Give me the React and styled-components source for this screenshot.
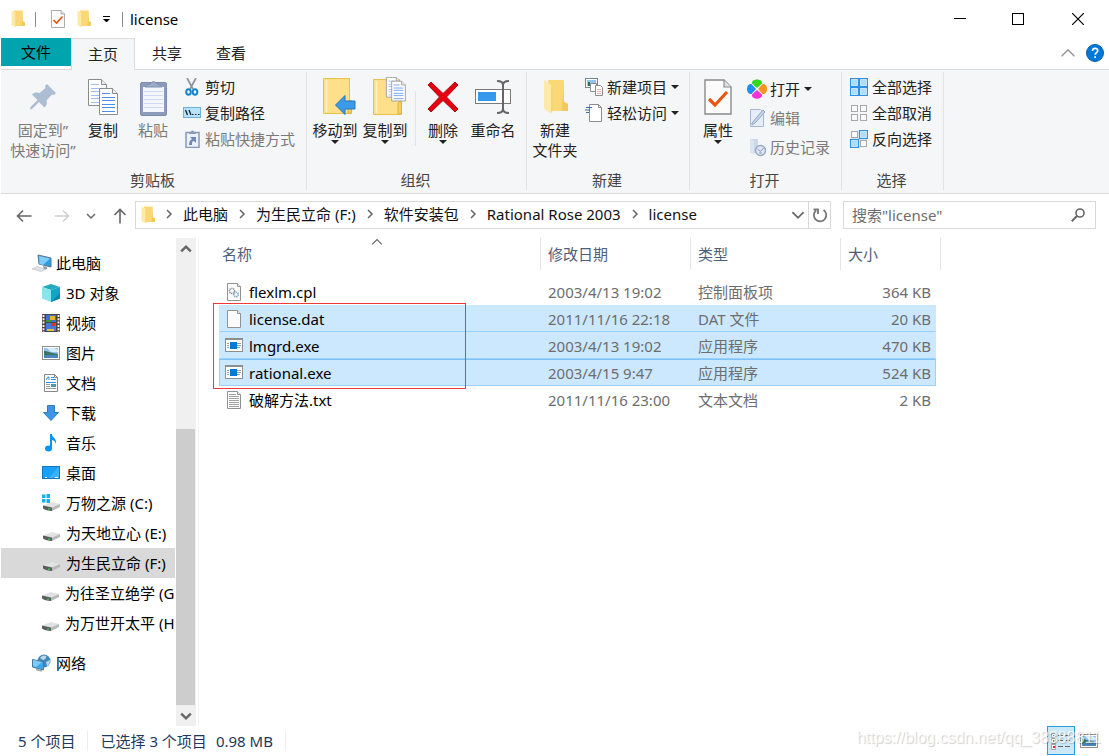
import React from "react"
import styled, { createGlobalStyle } from "styled-components"

const GlobalStyle = createGlobalStyle`
  * {
    box-sizing: border-box;
  }

  body {
    margin: 0;
    background-color: #fff;
    color: #000;
    font-family: "Noto Sans", "Noto Sans CJK SC", sans-serif;
    font-size: 15px;
    line-height: 20px;
  }

  button,
  input {
    font: inherit;
    color: inherit;
  }

  button {
    padding: 0;
    border: 0;
    background: none;
    white-space: nowrap;
  }

  svg {
    display: block;
    flex: none;
  }
`

/* ---------- icons ---------- */

const FolderIcon = ({ width = 14, height = 18 }) => (
  <svg width={width} height={height} viewBox="0 0 24 35" preserveAspectRatio="none">
    <path d="M5 1h15v21l4 4v5H5z" fill="#fbd876" />
    <path d="M20 1v21l4 2v7h-6z" fill="#f3c95f" />
    <path d="M1 1l7 5v28l-7-5z" fill="#ffe9a6" />
    <path d="M8 8l1-1v24l-1 2z" fill="#f4ce6b" />
  </svg>
)

const CheckPageIcon = ({ width = 14, height = 18 }) => (
  <svg width={width} height={height} viewBox="0 0 28 36">
    <path d="M1 1h19l7 7v27H1z" fill="#fbfbfb" stroke="#8a8a8a" strokeWidth="1.4" />
    <path d="M20 1v7h7" fill="#e2e2e2" stroke="#8a8a8a" strokeWidth="1.2" />
    <path d="M5 20l6 6L23 13" fill="none" stroke="#ea5413" strokeWidth="3.2" />
  </svg>
)

const PinIcon = () => (
  <svg width="26" height="28" viewBox="0 0 26 28">
    <path
      d="M17 1l9 9-2 2-2-.5-5.500 6c1 3 0 5-2 7L9 19l-7 7-2 .5.500-2.500 7-7-5.500-5.500c2-2 4.500-2.500 7.500-1.500l6-5-.5-2z"
      fill="#adbdd3"
    />
  </svg>
)

const SheetShape = ({ x, y, tint = "#4a8cf0" }) => (
  <g transform={`translate(${x} ${y})`}>
    <path d="M.5.500h13l5 5v21H.5z" fill="#fff" stroke="#8c8c8c" />
    <path d="M13.500.500v5h5" fill="#eee" stroke="#8c8c8c" />
    <path d="M3 5.500h8M3 9.500h13M3 12.500h13M3 16.500h13M3 19.500h13M3 23.500h13" stroke={tint} />
  </g>
)

const CopyIcon = () => (
  <svg width="30" height="37" viewBox="0 0 30 37">
    <SheetShape x={0} y={0} tint="#9dbff5" />
    <SheetShape x={11} y={9} />
  </svg>
)

const PasteIcon = () => (
  <svg width="27" height="37" viewBox="0 0 27 37">
    <rect x=".5" y="3.500" width="26" height="33" rx="1.500" fill="#8b9bb9" stroke="#7b8cac" />
    <path d="M3 8h21v25H3z" fill="#f3f7fd" />
    <path d="M4 12.500h19M4 16.500h19M4 20.500h19M4 24.500h19M4 28.500h19" stroke="#cfdcf0" />
    <path d="M5 8c1-3 5-2 6-4a3 3 0 0 1 5 0c1 2 5 1 6 4z" fill="#9baac6" stroke="#8091b0" />
  </svg>
)

const CutIcon = () => (
  <svg width="18" height="18" viewBox="0 0 18 18">
    <path d="M4 0l6 11M13 0L7 11" stroke="#8c949c" strokeWidth="1.700" fill="none" />
    <ellipse cx="5.500" cy="14" rx="2.300" ry="2.800" fill="none" stroke="#1687c9" strokeWidth="2" />
    <ellipse cx="12" cy="14" rx="2.300" ry="2.800" fill="none" stroke="#1687c9" strokeWidth="2" />
  </svg>
)

const PathIcon = () => (
  <svg width="18" height="18" viewBox="0 0 18 18">
    <rect x=".5" y="3.500" width="17" height="10" fill="#b8e2fb" stroke="#6cb0dd" />
    <path d="M2.500 6l2 5M6 6l2 5" stroke="#12232f" strokeWidth="1.300" />
    <path d="M9 10.500h1.500M12 10.500h1.500M15 10.500h1.500" stroke="#12232f" />
  </svg>
)

const ShortcutIcon = () => (
  <svg width="18" height="18" viewBox="0 0 18 18">
    <path d="M3 2.500h13v15H3z" fill="#eaf1fa" stroke="#8799b8" strokeWidth="1.500" />
    <path d="M6 3l2-1a1.500 1.500 0 0 1 3 0l2 1v1H6z" fill="#8799b8" />
    <path d="M7 7h6v6l-2-2c-2 0-2 2-2 4H6c0-3 1-5 3-6z" fill="#7388b0" />
  </svg>
)

const BigFolder = () => (
  <g>
    <path d="M.5 1.500h26v22h2v13H.5z" fill="#ffe08a" stroke="#e9c04f" />
    <path d="M3.500 3v32" stroke="#fff0bf" strokeWidth="1.500" />
    <path d="M25 36V25c1-2 3-2 3.500 0v11z" fill="#f5cf63" stroke="#e0b23d" />
  </g>
)

const MoveToIcon = () => (
  <svg width="42" height="40" viewBox="-9 0 42 40">
    <BigFolder />
    <path d="M12.500 28L22 18.500v5.500h10v8H22v5.500z" fill="#3c9be8" stroke="#2079c7" />
  </svg>
)

const CopyToIcon = () => (
  <svg width="43" height="40" viewBox="-9 0 43 40">
    <g transform="translate(0 1)">
      <BigFolder />
    </g>
    <g transform="translate(13 0) scale(.76)">
      <SheetShape x={0} y={0} tint="#8bb4f4" />
      <SheetShape x={7} y={5} />
    </g>
  </svg>
)

const DeleteIcon = () => (
  <svg width="32" height="32" viewBox="0 0 32 32">
    <path
      d="M4 1l12 11.500L28 1l3 3-11.500 12L31 28l-3 3-12-11.500L4 31l-3-3 11.500-12L1 4z"
      fill="#e60012"
      stroke="#a81010"
    />
  </svg>
)

const RenameIcon = () => (
  <svg width="36" height="34" viewBox="0 0 36 34">
    <rect x=".5" y="9.500" width="35" height="14" fill="#fff" stroke="#7a7a7a" />
    <rect x="3" y="12" width="18" height="9" fill="#3598ea" />
    <path d="M22 1c3 0 6 1 6 4v24c0 3-3 4-6 4M34 1c-3 0-6 1-6 4v24c0 3 3 4 6 4" fill="none" stroke="#666" strokeWidth="2" />
  </svg>
)

const NewItemIcon = () => (
  <svg width="18" height="18" viewBox="0 0 18 18">
    <rect x=".5" y=".5" width="12" height="9" fill="#fff" stroke="#6e8797" />
    <path d="M2 2h9v6H2z" fill="#8cc7ea" />
    <path d="M3 8V4h2v4z" fill="#2c7059" />
    <path d="M5.500 5.500h6v8h-6z" fill="#fff" stroke="#8c8c8c" />
    <path d="M10.500 7.500h5l2 2v8h-7z" fill="#fff" stroke="#8c8c8c" />
    <path d="M12 11.500h4M12 13.500h4M12 15.500h4" stroke="#edaaaa" />
  </svg>
)

const EasyAccessIcon = () => (
  <svg width="18" height="18" viewBox="0 0 18 18">
    <path d="M4.500.500h9l3 3v14h-12z" fill="#fff" stroke="#8c8c8c" />
    <path d="M13.500.500v3h3" fill="none" stroke="#8c8c8c" />
    <path d="M1 3.500h6M0 6h5M1 8.500h3" stroke="#2e6fae" strokeWidth="1.200" />
  </svg>
)

const OpenIcon = () => (
  <svg width="20" height="20" viewBox="0 0 20 20">
    <path d="M10 9L5 4.500C4-1 16-1 15 4.500z" fill="#36d61f" />
    <path d="M11 10l4.500-5c6-1 6 11 0 10z" fill="#f7941d" />
    <path d="M10 11l5 4.500c1 5.500-11 5.500-10 0z" fill="#ee35d2" />
    <path d="M9 10l-4.500 5c-6 1-6-11 0-10z" fill="#1e8ff2" />
  </svg>
)

const EditIcon = () => (
  <svg width="20" height="20" viewBox="0 0 20 20">
    <path d="M3.500 1.500h10l3 3v14h-13z" fill="#e5edf7" stroke="#a8b8d2" />
    <path d="M5 15L16 2l2 2L8 15l-3 2z" fill="#c5d3e7" stroke="#93a7c6" />
  </svg>
)

const HistoryIcon = () => (
  <svg width="20" height="20" viewBox="0 0 20 20">
    <path d="M3 2h8v14H3z" fill="#ccd7e8" />
    <path d="M3 1l4 3v14l-4-3z" fill="#dbe4f1" />
    <circle cx="13.500" cy="13.500" r="5" fill="#dfe7f3" stroke="#9aabc9" strokeWidth="1.500" />
    <path d="M10.500 12l3 2.500 3-3.500M12 16h3" fill="none" stroke="#8799b8" />
  </svg>
)

const squares = [
  [1.500, 1.500],
  [10.500, 1.500],
  [1.500, 10.500],
  [10.500, 10.500],
]

const SelectIcon = ({ on }) => (
  <svg width="18" height="18" viewBox="0 0 18 18">
    {squares.map(([x, y], i) =>
      on.includes(i) ? (
        <g key={i}>
          <rect x={x - 1} y={y - 1} width="8" height="8" fill="#e6f5ff" stroke="#2e90e5" strokeWidth="1.300" />
          <rect x={x + 0.500} y={y + 0.500} width="5" height="5" fill="#aeddfc" />
        </g>
      ) : (
        <rect key={i} x={x} y={y} width="6" height="6" fill="#fafafa" stroke="#a8a8a8" />
      )
    )}
  </svg>
)

const HelpIcon = () => (
  <svg width="18" height="18" viewBox="0 0 18 18">
    <circle cx="9" cy="9" r="8.500" fill="#0078d7" stroke="#0a5ea8" />
    <path d="M6.500 7c0-3.500 5.200-3.500 5.200-.3 0 2-2.500 2-2.500 4.100" fill="none" stroke="#fff" strokeWidth="1.700" />
    <path d="M8.300 12.300H10V14H8.300z" fill="#fff" />
  </svg>
)

const Chevron = ({ dir = "right", size = 10, color = "#666", weight = 1.500 }) => {
  const turn = { right: 0, down: 90, left: 180, up: 270 }[dir]
  return (
    <svg width={size} height={size} viewBox="0 0 10 10">
      <path d="M3 1l4 4-4 4" transform={`rotate(${turn} 5 5)`} fill="none" stroke={color} strokeWidth={weight} />
    </svg>
  )
}

const ArrowIcon = ({ dir, color = "#666" }) => {
  const turn = { left: 0, up: 90, right: 180 }[dir]
  return (
    <svg width="16" height="16" viewBox="0 0 16 16">
      <path
        d="M15.500 8H1.500M7 2.500L1.500 8 7 13.500"
        transform={`rotate(${turn} 8 8)`}
        fill="none"
        stroke={color}
        strokeWidth="1.600"
      />
    </svg>
  )
}

const RefreshIcon = () => (
  <svg width="16" height="16" viewBox="0 0 16 16">
    <path d="M11.500 3A6.200 6.200 0 1 1 4 3.500" fill="none" stroke="#777" strokeWidth="1.800" />
    <path d="M1.500 2.500h4.500V7" fill="none" stroke="#777" strokeWidth="1.800" />
  </svg>
)

const SearchIcon = () => (
  <svg width="14" height="14" viewBox="0 0 14 14">
    <circle cx="9" cy="5" r="4" fill="none" stroke="#666" strokeWidth="1.600" />
    <path d="M6.200 7.800L.8 13.200" stroke="#666" strokeWidth="2" />
  </svg>
)

const PcIcon = () => (
  <svg width="20" height="18" viewBox="0 0 20 18">
    <path d="M6 1l13 3v9L7 10z" fill="#2f9de4" stroke="#5b7488" />
    <path d="M7 2l11 2.500-7 6.500-3.500-1z" fill="#7fcdf8" />
    <path d="M11 12l4 1v2l-3 1z" fill="#8c98a2" />
    <path d="M0 15l5-2.500 9 3-5 2z" fill="#dfe3e7" stroke="#b9c0c6" strokeWidth=".6" />
  </svg>
)

const CubeIcon = () => (
  <svg width="18" height="18" viewBox="0 0 18 18">
    <path d="M9 0l9 3-9 3-9-3z" fill="#27a9bd" />
    <path d="M0 3l9 3v12l-9-3.500z" fill="#8ae4ee" />
    <path d="M18 3L9 6v12l9-3.500z" fill="#12a5c6" />
    <path d="M18 9l-9 9 9-3.500z" fill="#0787ab" />
  </svg>
)

const VideoIcon = () => (
  <svg width="18" height="18" viewBox="0 0 18 18">
    <path d="M0 0h18v18H0z" fill="#4b4646" />
    <path d="M4 1h10v7H4z" fill="#3f6fd1" />
    <path d="M4 9h10v8H4z" fill="#477ad8" />
    <path d="M8 2h5v4H8z" fill="#e3b82e" />
    <path d="M4 6h5v2H4z" fill="#3d9440" />
    <path d="M9 9h4v3H9z" fill="#d5352c" />
    <path d="M5 15h7v2H5z" fill="#e8c33a" />
    <path d="M1.500 1v17M16.500 1v17" stroke="#fff" strokeWidth="1.800" strokeDasharray="2 1.300" />
  </svg>
)

const PictureIcon = () => (
  <svg width="18" height="18" viewBox="0 0 18 18">
    <rect x=".5" y="2.500" width="17" height="13" fill="#fff" stroke="#909090" />
    <path d="M2 4h14v10H2z" fill="#8fc4f1" />
    <path d="M5 4h7l4 2v2H9z" fill="#d9ecfa" />
    <path d="M2 7c4 0 6 2 14 3v2H2z" fill="#3d7564" />
    <path d="M2 11h14v3H2z" fill="#4a86ba" />
  </svg>
)

const DocumentIcon = () => (
  <svg width="18" height="18" viewBox="0 0 18 18">
    <path d="M2.500.500h10l3 3v14h-13z" fill="#fff" stroke="#888" />
    <path d="M12.500.500v3h3" fill="none" stroke="#888" />
    <path d="M4 6l2-3h1v3M9 3.500h3M9 5.500h5M4 8.500h10" stroke="#2f8fd8" fill="none" />
    <path d="M4 10.500h4M4 12.500h4M4 14.500h10" stroke="#999" />
    <path d="M9 10h5v3H9z" fill="#4c93b8" />
  </svg>
)

const DownloadIcon = () => (
  <svg width="18" height="18" viewBox="0 0 18 18">
    <path d="M5.500 1.500h7v7h4L9 16.500l-7.500-8h4z" fill="#3f94e6" stroke="#2c7bca" />
  </svg>
)

const MusicIcon = () => (
  <svg width="18" height="18" viewBox="0 0 18 18">
    <ellipse cx="6.500" cy="14.500" rx="3.500" ry="3" fill="#0a95f0" />
    <path d="M8 0h2c0 4 5 4 4 10-1-3-2-3.500-4-4v9H8z" fill="#0a95f0" />
  </svg>
)

const DesktopIcon = () => (
  <svg width="18" height="18" viewBox="0 0 18 18">
    <rect x=".5" y="2.500" width="17" height="12" fill="#18a0fb" stroke="#1176bd" />
    <path d="M7 14L16 3h1v11z" fill="#3bb1ff" />
    <path d="M3 13.500h2M13 13.500h3" stroke="#fff" />
  </svg>
)

const DriveIcon = ({ windows }) => (
  <svg width="19" height="18" viewBox="0 0 19 18">
    <path d="M1 11.500L10 8l8 2-8 3.500z" fill="#e1e2e4" />
    <path d="M1 11.500l9 2v3.500c-4 0-7-1-9-2.500z" fill="#5b5c5d" />
    <path d="M10 13.500l8-3.500v3l-8 4z" fill="#b6b8ba" />
    <path d="M6 14.500h2v1.200H6z" fill="#33d04c" />
    {windows && <path d="M0 .5h3.500V4H0zM4.500 0H8v4H4.500zM0 5h3.500v3.500H0zM4.500 5H8v4H4.500z" fill="#14b1ef" />}
  </svg>
)

const NetworkIcon = () => (
  <svg width="20" height="18" viewBox="0 0 20 18">
    <circle cx="12" cy="7" r="6.500" fill="#4388b9" />
    <path d="M8 4c2-3 5-3 6-2s-1 4-3 4zM14 8l4-2c0 4-2 6-3 6z" fill="#b5d9e8" />
    <path d="M.5 5.500l11 2.500v8L.5 13z" fill="#3da9ef" stroke="#4a7895" />
    <path d="M1 6l9 2-6 5-3-1z" fill="#7ccdfa" />
    <path d="M4 15.500l6 1.500" stroke="#a0a8b0" strokeWidth="1.500" />
  </svg>
)

const FileIcon = ({ kind }) => {
  if (kind === "exe") {
    return (
      <svg width="18" height="18" viewBox="0 0 18 18">
        <rect x=".5" y="1.500" width="17" height="13" fill="#fff" stroke="#8e8e8e" />
        <path d="M0 1h18v2H0z" fill="#8e8e8e" />
        <path d="M2 6.500h2M2 8.500h2M2 10.500h2M12 6.500h4M12 8.500h4M12 10.500h3" stroke="#9b9b9b" />
        <path d="M5 5h7v7H5z" fill="#0078d7" />
      </svg>
    )
  }
  return (
    <svg width="18" height="18" viewBox="0 0 18 18">
      <path d="M2.500.500h10l3 3v14h-13z" fill="#fbfbfb" stroke="#929292" />
      <path d="M12.500.500v3h3" fill="#eee" stroke="#929292" />
      {kind === "txt" && (
        <path d="M4 3.500h7M4 5.500h10M4 7.500h10M4 9.500h10M4 11.500h10M4 13.500h10M4 15.500h10" stroke="#a3a3a3" />
      )}
      {kind === "cpl" && (
        <g fill="none" strokeWidth="1.600" strokeDasharray="1.200 .6">
          <circle cx="7" cy="8" r="2.500" stroke="#8b959b" />
          <circle cx="11" cy="11.500" r="2.200" stroke="#7ba6c4" />
        </g>
      )}
    </svg>
  )
}

const DetailsIcon = () => (
  <svg width="20" height="18" viewBox="0 0 20 18">
    <path d="M.5 1.500h4v4h-4zM.5 6.500h4v5h-4zM.5 12.500h4v5h-4z" fill="#fff" stroke="#a3a3a3" />
    <path d="M2 3h1.500v1.500H2z" fill="#2a77b8" />
    <path d="M2 8h1.500v2H2z" fill="#5a8a3c" />
    <path d="M2 14h2v2H2z" fill="#c8321e" />
    <path d="M7 3.500h5M14 3.500h5M7 8.500h5M14 8.500h5M7 14.500h5M14 14.500h5" stroke="#666" />
  </svg>
)

/* ---------- data ---------- */

const places = [
  { label: "3D 对象", icon: <CubeIcon /> },
  { label: "视频", icon: <VideoIcon /> },
  { label: "图片", icon: <PictureIcon /> },
  { label: "文档", icon: <DocumentIcon /> },
  { label: "下载", icon: <DownloadIcon /> },
  { label: "音乐", icon: <MusicIcon /> },
  { label: "桌面", icon: <DesktopIcon /> },
  { label: "万物之源 (C:)", icon: <DriveIcon windows /> },
  { label: "为天地立心 (E:)", icon: <DriveIcon /> },
  { label: "为生民立命 (F:)", icon: <DriveIcon />, active: true },
  { label: "为往圣立绝学 (G:)", icon: <DriveIcon /> },
  { label: "为万世开太平 (H:)", icon: <DriveIcon /> },
]

const files = [
  { name: "flexlm.cpl", kind: "cpl", date: "2003/4/13 19:02", type: "控制面板项", size: "364 KB" },
  { name: "license.dat", kind: "dat", date: "2011/11/16 22:18", type: "DAT 文件", size: "20 KB", selected: true },
  { name: "lmgrd.exe", kind: "exe", date: "2003/4/13 19:02", type: "应用程序", size: "470 KB", selected: true },
  { name: "rational.exe", kind: "exe", date: "2003/4/15 9:47", type: "应用程序", size: "524 KB", selected: true, focused: true },
  { name: "破解方法.txt", kind: "txt", date: "2011/11/16 23:00", type: "文本文档", size: "2 KB" },
]

const crumbs = ["此电脑", "为生民立命 (F:)", "软件安装包", "Rational Rose 2003", "license"]

/* ---------- components ---------- */

const BigButton = ({ icon, lines, width = 50, muted, menu }) => (
  <BigButtonStyle type="button" $width={width} $muted={muted}>
    <BigIcon>{icon}</BigIcon>
    {lines.map(line => (
      <span key={line}>{line}</span>
    ))}
    {menu && <Caret />}
  </BigButtonStyle>
)

const SmallButton = ({ icon, label, muted, menu }) => (
  <SmallButtonStyle type="button" $muted={muted}>
    <SmallIcon>{icon}</SmallIcon>
    {label}
    {menu && <Caret />}
  </SmallButtonStyle>
)

const RibbonGroup = ({ label, left = 3, right = 11, children }) => (
  <GroupStyle>
    <GroupBody $left={left} $right={right}>
      {children}
    </GroupBody>
    <GroupLabel>{label}</GroupLabel>
  </GroupStyle>
)

const App = () => (
  <Window>
    <GlobalStyle />
    <TitleBar>
      <QuickAccess>
        <FolderIcon />
        <TitleDivider />
        <IconButton type="button" aria-label="属性">
          <CheckPageIcon />
        </IconButton>
        <IconButton type="button" aria-label="新建文件夹">
          <FolderIcon />
        </IconButton>
        <IconButton type="button" aria-label="自定义快速访问工具栏">
          <QuickMenu />
        </IconButton>
        <TitleDivider />
      </QuickAccess>
      <Title>license</Title>
      <Caption type="button" aria-label="最小化">
        <svg width="12" height="12" viewBox="0 0 12 12">
          <path d="M0 5.500h12" stroke="#000" />
        </svg>
      </Caption>
      <Caption type="button" aria-label="最大化">
        <svg width="12" height="12" viewBox="0 0 12 12">
          <rect x=".5" y=".5" width="11" height="11" fill="none" stroke="#000" />
        </svg>
      </Caption>
      <Caption type="button" aria-label="关闭">
        <svg width="12" height="12" viewBox="0 0 12 12">
          <path d="M0 0l12 12M12 0L0 12" stroke="#000" strokeWidth="1.200" />
        </svg>
      </Caption>
    </TitleBar>

    <Tabs>
      <FileTab type="button">文件</FileTab>
      <Tab type="button" $active>
        主页
      </Tab>
      <Tab type="button">共享</Tab>
      <Tab type="button">查看</Tab>
      <TabTools>
        <IconButton type="button" aria-label="最小化功能区">
          <Chevron dir="up" size={16} color="#999" weight={1} />
        </IconButton>
        <IconButton type="button" aria-label="帮助">
          <HelpIcon />
        </IconButton>
      </TabTools>
    </Tabs>

    <Ribbon>
      <RibbonGroup label="剪贴板" left={7}>
        <BigButton icon={<PinIcon />} lines={["固定到”", "快速访问”"]} width={70} muted />
        <BigButton icon={<CopyIcon />} lines={["复制"]} />
        <BigButton icon={<PasteIcon />} lines={["粘贴"]} muted />
        <ButtonList>
          <SmallButton icon={<CutIcon />} label="剪切" />
          <SmallButton icon={<PathIcon />} label="复制路径" />
          <SmallButton icon={<ShortcutIcon />} label="粘贴快捷方式" muted />
        </ButtonList>
      </RibbonGroup>
      <RibbonGroup label="组织" right={8}>
        <BigButton icon={<MoveToIcon />} lines={["移动到"]} menu />
        <BigButton icon={<CopyToIcon />} lines={["复制到"]} menu />
        <BodyDivider />
        <BigButton icon={<DeleteIcon />} lines={["删除"]} menu />
        <BigButton icon={<RenameIcon />} lines={["重命名"]} />
      </RibbonGroup>
      <RibbonGroup label="新建" right={10}>
        <BigButton icon={<FolderIcon width={25} height={36} />} lines={["新建", "文件夹"]} />
        <ButtonList>
          <SmallButton icon={<NewItemIcon />} label="新建项目" menu />
          <SmallButton icon={<EasyAccessIcon />} label="轻松访问" menu />
        </ButtonList>
      </RibbonGroup>
      <RibbonGroup label="打开">
        <BigButton icon={<CheckPageIcon width={28} height={36} />} lines={["属性"]} menu />
        <ButtonList $tall>
          <SmallButton icon={<OpenIcon />} label="打开" menu />
          <SmallButton icon={<EditIcon />} label="编辑" muted />
          <SmallButton icon={<HistoryIcon />} label="历史记录" muted />
        </ButtonList>
      </RibbonGroup>
      <RibbonGroup label="选择">
        <ButtonList>
          <SmallButton icon={<SelectIcon on={[0, 1, 2, 3]} />} label="全部选择" />
          <SmallButton icon={<SelectIcon on={[]} />} label="全部取消" />
          <SmallButton icon={<SelectIcon on={[1, 2]} />} label="反向选择" />
        </ButtonList>
      </RibbonGroup>
    </Ribbon>

    <AddressRow>
      <NavButtons>
        <IconButton type="button" aria-label="后退">
          <ArrowIcon dir="left" />
        </IconButton>
        <IconButton type="button" aria-label="前进">
          <ArrowIcon dir="right" color="#d0d0d0" />
        </IconButton>
        <IconButton type="button" aria-label="最近浏览的位置">
          <Chevron dir="down" />
        </IconButton>
        <IconButton type="button" aria-label="上移">
          <ArrowIcon dir="up" />
        </IconButton>
      </NavButtons>
      <AddressBox>
        <FolderIcon />
        <Crumbs aria-label="路径">
          {crumbs.map(crumb => (
            <React.Fragment key={crumb}>
              <Chevron />
              <Crumb href="#">{crumb}</Crumb>
            </React.Fragment>
          ))}
        </Crumbs>
        <IconButton type="button" aria-label="历史位置">
          <Chevron dir="down" size={14} weight={1.300} />
        </IconButton>
        <Refresh type="button" aria-label="刷新">
          <RefreshIcon />
        </Refresh>
      </AddressBox>
      <SearchBox>
        <SearchInput type="text" aria-label="搜索" placeholder={'搜索"license"'} />
        <SearchIcon />
      </SearchBox>
    </AddressRow>

    <Main>
      <Sidebar>
        <Place href="#" $root>
          <PcIcon />
          此电脑
        </Place>
        {places.map(place => (
          <Place key={place.label} href="#" $active={place.active}>
            <PlaceIcon>{place.icon}</PlaceIcon>
            {place.label}
          </Place>
        ))}
        <PlaceGap />
        <Place href="#" $root>
          <NetworkIcon />
          网络
        </Place>
      </Sidebar>
      <Scrollbar>
        <ScrollButton type="button" aria-label="向上滚动">
          <Chevron dir="up" size={12} weight={2} />
        </ScrollButton>
        <ScrollTrack />
        <ScrollThumb />
        <ScrollButton type="button" aria-label="向下滚动">
          <Chevron dir="down" size={12} weight={2} />
        </ScrollButton>
      </Scrollbar>
      <FilePane>
        <FileTable>
          <colgroup>
            <NameCol />
            <Col />
            <Col />
            <SizeCol />
          </colgroup>
          <thead>
            <tr>
              <HeadCell $first>
                名称
                <SortMark>
                  <Chevron dir="up" size={12} weight={1} />
                </SortMark>
              </HeadCell>
              <HeadCell>修改日期</HeadCell>
              <HeadCell>类型</HeadCell>
              <HeadCell>大小</HeadCell>
            </tr>
          </thead>
          <tbody>
            <SpacerRow aria-hidden="true">
              <td colSpan={4} />
            </SpacerRow>
            {files.map(file => (
              <FileRow key={file.name} $selected={file.selected} $focused={file.focused}>
                <NameCell>
                  <FileName>
                    <FileIcon kind={file.kind} />
                    {file.name}
                  </FileName>
                </NameCell>
                <Cell>{file.date}</Cell>
                <Cell>{file.type}</Cell>
                <Cell $right>{file.size}</Cell>
              </FileRow>
            ))}
          </tbody>
        </FileTable>
        <Highlight />
      </FilePane>
    </Main>

    <StatusBar>
      <StatusItem>5 个项目</StatusItem>
      <StatusItem>
        <span>已选择 3 个项目</span>
        <span>0.98 MB</span>
      </StatusItem>
      <ViewButtons>
        <ViewButton type="button" aria-label="详细信息" $active>
          <DetailsIcon />
        </ViewButton>
        <ViewButton type="button" aria-label="大缩略图">
          <PictureIcon />
        </ViewButton>
      </ViewButtons>
      <Watermark>https://blog.csdn.net/qq_38388811</Watermark>
    </StatusBar>
  </Window>
)

/* ---------- styles ---------- */

const Window = styled.div`
  display: flex;
  flex-direction: column;
  min-height: 100vh;
  padding-left: 1px;
  overflow: hidden;
`

const IconButton = styled.button`
  display: flex;
  align-items: center;
  justify-content: center;
`

const Caret = styled.span`
  border: 4px solid transparent;
  border-top-color: currentColor;
  border-bottom: 0;
`

const TitleBar = styled.header`
  display: flex;
  align-items: center;
  height: 38px;
`

const QuickAccess = styled.div`
  display: flex;
  align-items: center;
  gap: 12px;
  padding-left: 10px;
`

const TitleDivider = styled.span`
  width: 1px;
  height: 15px;
  margin: 0 -1px 0 0;
  background-color: #8a8a8a;

  &:nth-child(2) {
    margin: 0 3px 0 -2px;
  }
`

const QuickMenu = styled.span`
  width: 7px;
  height: 7px;
  border-top: 1px solid #000;

  &::after {
    content: "";
    display: block;
    margin-top: 2px;
    border: 3px solid transparent;
    border-top-color: #000;
    border-bottom: 0;
  }
`

const Title = styled.span`
  flex: 1;
  padding-left: 8px;
`

const Caption = styled.button`
  display: flex;
  align-items: center;
  justify-content: center;
  width: 58px;
  height: 38px;

  &:last-child {
    width: 62px;
  }
`

const Tabs = styled.nav`
  display: flex;
  height: 31px;
`

const Tab = styled.button`
  position: relative;
  width: 64px;
  height: ${props => (props.$active ? 32 : 31)}px;
  padding-bottom: 2px;
  color: #222;
  border: 1px solid ${props => (props.$active ? "#dadbdc" : "transparent")};
  border-bottom: 0;
  background-color: ${props => (props.$active ? "#f5f6f7" : "transparent")};
  z-index: 1;
`

const FileTab = styled.button`
  width: 70px;
  height: 28px;
  background-color: #00a4ae;
`

const TabTools = styled.div`
  display: flex;
  align-items: center;
  gap: 10px;
  margin-left: auto;
  padding: 0 5px 2px 0;
`

const Ribbon = styled.section`
  display: flex;
  height: 125px;
  padding: 2px 0 3px;
  border: 1px solid #dadbdc;
  border-width: 1px 0;
  background-color: #f5f6f7;
`

const GroupStyle = styled.div`
  display: flex;
  flex-direction: column;
  border-right: 1px solid #e2e3e4;
`

const GroupBody = styled.div`
  display: flex;
  flex: 1;
  padding-top: 2px;
  padding-left: ${props => props.$left}px;
  padding-right: ${props => props.$right}px;
`

const GroupLabel = styled.div`
  padding-right: 2px;
  color: #444;
  text-align: center;
`

const BigButtonStyle = styled.button`
  display: flex;
  flex-direction: column;
  align-items: center;
  width: ${props => props.$width}px;
  color: ${props => (props.$muted ? "#7a7a7a" : "#222")};
`

const BigIcon = styled.span`
  display: flex;
  align-items: center;
  height: 46px;
`

const BodyDivider = styled.span`
  width: 1px;
  height: 55px;
  margin: 17px 2px 0 5px;
  background-color: #e2e3e4;
`

const ButtonList = styled.div`
  display: grid;
  align-content: start;
  justify-items: start;
  grid-auto-rows: ${props => (props.$tall ? 29 : 26)}px;
  padding-left: 5px;
`

const SmallButtonStyle = styled.button`
  display: flex;
  align-items: center;
  color: ${props => (props.$muted ? "#7a7a7a" : "#222")};

  ${Caret} {
    margin-left: 4px;
  }
`

const SmallIcon = styled.span`
  display: flex;
  justify-content: center;
  width: 18px;
  margin-right: 4px;
`

const AddressRow = styled.div`
  display: flex;
  align-items: center;
  height: 42px;
  padding-right: 13px;
`

const NavButtons = styled.div`
  display: flex;
  align-items: center;
  width: 134px;
  padding: 2px 0 0 15px;
  gap: 22px;

  ${IconButton}:nth-child(n + 3) {
    margin-left: -6px;
  }
`

const AddressBox = styled.div`
  display: flex;
  align-items: center;
  flex: 1;
  height: 28px;
  padding-left: 5px;
  border: 1px solid #d9d9d9;
`

const Crumbs = styled.nav`
  display: flex;
  align-items: center;
  flex: 1;
  gap: 9px;
  padding: 0 0 2px 9px;
  white-space: nowrap;
`

const Crumb = styled.a`
  color: #111;
  text-decoration: none;
`

const Refresh = styled(IconButton)`
  width: 22px;
  height: 26px;
  margin-left: 3px;
  border-left: 1px solid #d9d9d9;
`

const SearchBox = styled.div`
  display: flex;
  align-items: center;
  width: 253px;
  height: 28px;
  margin-left: 12px;
  padding: 0 10px 0 8px;
  border: 1px solid #d9d9d9;
`

const SearchInput = styled.input`
  flex: 1;
  min-width: 0;
  padding: 0;
  border: 0;
  outline: 0;
  background: none;

  &::placeholder {
    color: #6d6d6d;
    opacity: 1;
  }
`

const Main = styled.main`
  display: flex;
  flex: 1;
  padding-top: 2px;
`

const Sidebar = styled.nav`
  width: 174px;
  margin-right: 1px;
  padding-top: 10px;
  overflow: hidden;
`

const Place = styled.a`
  display: flex;
  align-items: center;
  gap: ${props => (props.$root ? 4 : 5)}px;
  height: 30px;
  padding-left: ${props => (props.$root ? 31 : 40)}px;
  color: #000;
  text-decoration: none;
  white-space: nowrap;
  background-color: ${props => (props.$active ? "#d9d9d9" : "transparent")};
`

const PlaceIcon = styled.span`
  display: flex;
  justify-content: center;
  width: 20px;
`

const PlaceGap = styled.div`
  height: 10px;
`

const Scrollbar = styled.div`
  display: flex;
  flex-direction: column;
  width: 20px;
  background-color: #f0f0f0;
`

const ScrollButton = styled(IconButton)`
  height: 21px;
`

const ScrollTrack = styled.div`
  flex: 170;
`

const ScrollThumb = styled.div`
  flex: 276;
  margin-right: 1px;
  background-color: #cdcdcd;
`

const FilePane = styled.div`
  position: relative;
  flex: 1;
  margin-left: 2px;
  padding-left: 20px;
  border-left: 1px solid #f3f3f3;
`

const FileTable = styled.table`
  width: 717px;
  table-layout: fixed;
  border-collapse: separate;
  border-spacing: 0;
`

const NameCol = styled.col`
  width: 322px;
`

const Col = styled.col`
  width: 150px;
`

const SizeCol = styled.col`
  width: 95px;
`

const HeadCell = styled.th`
  position: relative;
  height: 32px;
  padding: 0 0 0 ${props => (props.$first ? 3 : 7)}px;
  color: #4c607a;
  font-weight: normal;
  text-align: left;

  &::after {
    content: "";
    position: absolute;
    top: 0;
    right: 0;
    width: 1px;
    height: 32px;
    background-color: #e5e5e5;
  }

  &:last-child::after {
    right: -5px;
  }
`

const SortMark = styled.span`
  position: absolute;
  top: -2px;
  left: 0;
  right: 6px;
  display: flex;
  justify-content: center;
`

const SpacerRow = styled.tr`
  td {
    height: 8px;
    padding: 0;
  }
`

const FileRow = styled.tr`
  background-color: ${props => (props.$selected ? "#cce8ff" : "transparent")};

  td {
    border: 1px solid transparent;
    border-width: 1px 0;
    border-bottom-color: ${props => (props.$selected ? "#99d1ff" : "transparent")};
    border-top-color: ${props => (props.$focused ? "#7fc2f8" : "transparent")};
  }

  td:first-child {
    border-left: 1px solid ${props => (props.$focused ? "#99d1ff" : "transparent")};
  }

  td:last-child {
    border-right: 1px solid ${props => (props.$focused ? "#99d1ff" : "transparent")};
  }
`

const Cell = styled.td`
  height: 27px;
  padding: 0 ${props => (props.$right ? 4 : 0)}px 0 7px;
  color: #6d6d6d;
  text-align: ${props => (props.$right ? "right" : "left")};
  white-space: nowrap;
`

const NameCell = styled(Cell)`
  padding-left: 5px;
  color: #000;
`

const FileName = styled.span`
  display: flex;
  align-items: center;
  gap: 6px;
`

const Highlight = styled.div`
  position: absolute;
  top: 65px;
  left: 14px;
  width: 253px;
  height: 86px;
  border: 1px solid #f03a3a;
  pointer-events: none;
`

const StatusBar = styled.footer`
  position: relative;
  display: flex;
  align-items: center;
  height: 30px;
  padding: 0 6px 1px 5px;
  color: #1e395b;
`

const StatusItem = styled.span`
  display: flex;
  gap: 9px;
  padding: 0 12px;
  border-right: 1px solid #eee;
`

const ViewButtons = styled.div`
  display: flex;
  margin-left: auto;
`

const ViewButton = styled.button`
  display: flex;
  align-items: center;
  justify-content: center;
  width: 28px;
  height: 29px;
  border: 1px solid ${props => (props.$active ? "#26a0da" : "transparent")};
  background-color: ${props => (props.$active ? "#cbe8f6" : "transparent")};
`

const Watermark = styled.span`
  position: absolute;
  right: 8px;
  top: 2px;
  color: rgba(255, 255, 255, 0.8);
  font-family: "Liberation Sans", sans-serif;
  font-size: 16px;
  text-shadow: 1px 1px 1px rgba(0, 0, 0, 0.2);
  pointer-events: none;
`

export default App
